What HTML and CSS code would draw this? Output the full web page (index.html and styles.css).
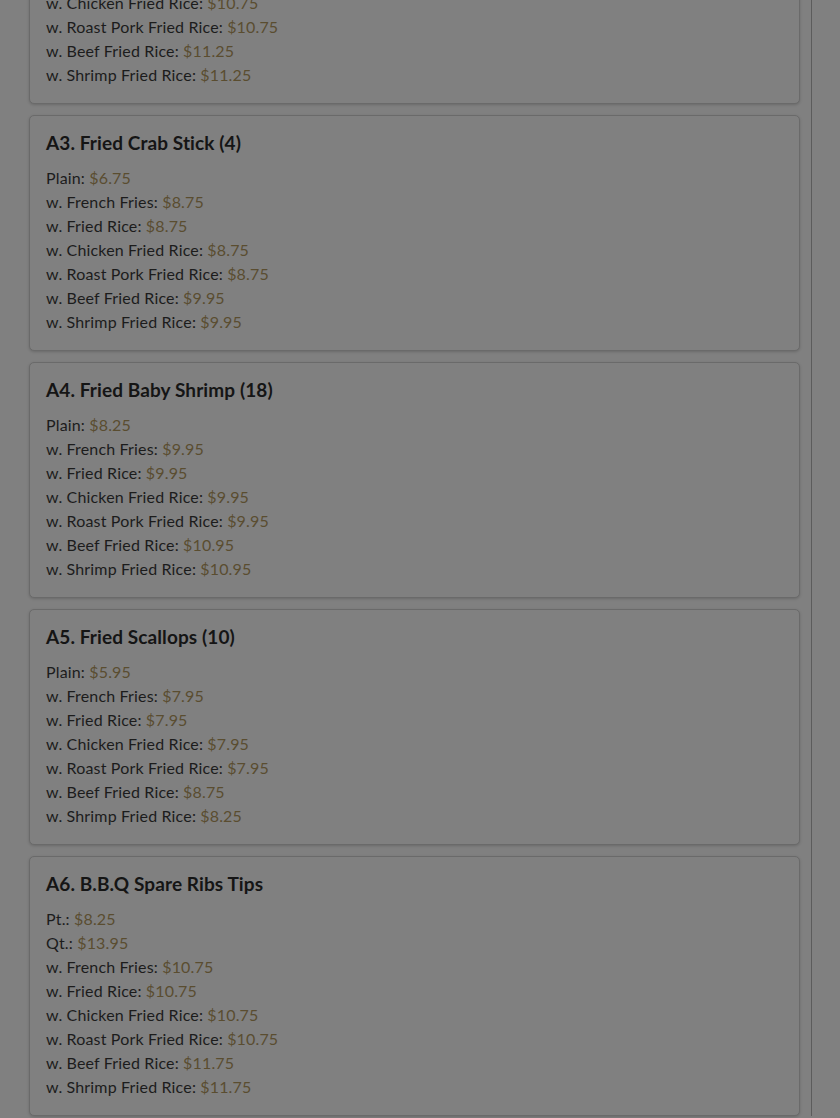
FILE: index.html
```html
<!DOCTYPE html>
<html lang="en">
<head>
<meta charset="utf-8">
<title>Menu</title>
<link rel="stylesheet" href="styles.css">
</head>
<body>
<div class="page">
  <main class="menu">
    <section class="card">
      <h5 class="title">A2. Fried Chicken Wings (4)</h5>
      <ul class="items">
        <li>Plain: <span class="price">$8.75</span></li>
        <li>w. French Fries: <span class="price">$10.75</span></li>
        <li>w. Fried Rice: <span class="price">$10.75</span></li>
        <li>w. Chicken Fried Rice: <span class="price">$10.75</span></li>
        <li>w. Roast Pork Fried Rice: <span class="price">$10.75</span></li>
        <li>w. Beef Fried Rice: <span class="price">$11.25</span></li>
        <li>w. Shrimp Fried Rice: <span class="price">$11.25</span></li>
      </ul>
    </section>
    <section class="card">
      <h5 class="title">A3. Fried Crab Stick (4)</h5>
      <ul class="items">
        <li>Plain: <span class="price">$6.75</span></li>
        <li>w. French Fries: <span class="price">$8.75</span></li>
        <li>w. Fried Rice: <span class="price">$8.75</span></li>
        <li>w. Chicken Fried Rice: <span class="price">$8.75</span></li>
        <li>w. Roast Pork Fried Rice: <span class="price">$8.75</span></li>
        <li>w. Beef Fried Rice: <span class="price">$9.95</span></li>
        <li>w. Shrimp Fried Rice: <span class="price">$9.95</span></li>
      </ul>
    </section>
    <section class="card">
      <h5 class="title">A4. Fried Baby Shrimp (18)</h5>
      <ul class="items">
        <li>Plain: <span class="price">$8.25</span></li>
        <li>w. French Fries: <span class="price">$9.95</span></li>
        <li>w. Fried Rice: <span class="price">$9.95</span></li>
        <li>w. Chicken Fried Rice: <span class="price">$9.95</span></li>
        <li>w. Roast Pork Fried Rice: <span class="price">$9.95</span></li>
        <li>w. Beef Fried Rice: <span class="price">$10.95</span></li>
        <li>w. Shrimp Fried Rice: <span class="price">$10.95</span></li>
      </ul>
    </section>
    <section class="card">
      <h5 class="title">A5. Fried Scallops (10)</h5>
      <ul class="items">
        <li>Plain: <span class="price">$5.95</span></li>
        <li>w. French Fries: <span class="price">$7.95</span></li>
        <li>w. Fried Rice: <span class="price">$7.95</span></li>
        <li>w. Chicken Fried Rice: <span class="price">$7.95</span></li>
        <li>w. Roast Pork Fried Rice: <span class="price">$7.95</span></li>
        <li>w. Beef Fried Rice: <span class="price">$8.75</span></li>
        <li>w. Shrimp Fried Rice: <span class="price">$8.25</span></li>
      </ul>
    </section>
    <section class="card">
      <h5 class="title">A6. B.B.Q Spare Ribs Tips</h5>
      <ul class="items">
        <li>Pt.: <span class="price">$8.25</span></li>
        <li>Qt.: <span class="price">$13.95</span></li>
        <li>w. French Fries: <span class="price">$10.75</span></li>
        <li>w. Fried Rice: <span class="price">$10.75</span></li>
        <li>w. Chicken Fried Rice: <span class="price">$10.75</span></li>
        <li>w. Roast Pork Fried Rice: <span class="price">$10.75</span></li>
        <li>w. Beef Fried Rice: <span class="price">$11.75</span></li>
        <li>w. Shrimp Fried Rice: <span class="price">$11.75</span></li>
      </ul>
    </section>
  </main>
</div>
</body>
</html>
```
FILE: styles.css
```css
html, body {
  margin: 0;
  padding: 0;
  background: #808080;
  height: 100%;
  overflow: hidden;
}
body {
  font-family: "Lato", "Open Sans", sans-serif;
  color: #1c1c1c;
}
.page {
  width: 812px;
  border-right: 1px solid #5c5c5c;
  min-height: 100%;
  box-sizing: border-box;
  padding: 0 11px 0 29px;
}
.menu {
  display: flex;
  flex-direction: column;
  gap: 11px;
  margin-top: -132px;
}
.card {
  background: #808080;
  border: 1px solid #6a6a6a;
  border-radius: 5px;
  box-shadow: 0 1px 3px rgba(0,0,0,0.18);
  padding: 16px;
}
.title {
  margin: 0 0 12px;
  font-size: 19px;
  line-height: 22px;
  font-weight: 700;
  letter-spacing: 0.1px;
  color: #151515;
}
.items {
  list-style: none;
  margin: 0;
  padding: 0;
  font-size: 16px;
  line-height: 24px;
  letter-spacing: 0.16px;
}
.price {
  color: #5a4d30;
}
```
